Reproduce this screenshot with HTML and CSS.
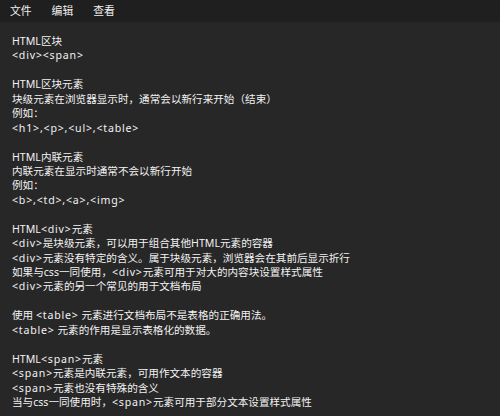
FILE: index.html
```html
<!DOCTYPE html>
<html lang="zh-CN">
<head>
<meta charset="utf-8">
<title>记事本</title>
<link rel="stylesheet" href="styles.css">
</head>
<body>
<div class="window">
  <nav class="menubar">
    <span class="menu-item">文件</span>
    <span class="menu-item">编辑</span>
    <span class="menu-item">查看</span>
  </nav>
  <main class="editor">
    <p class="block">HTML区块
<span class="tag">&lt;div&gt;&lt;span&gt;</span></p>
    <p class="block">HTML区块元素
块级元素在浏览器显示时，通常会以新行来开始（结束）
例如：
<span class="tag">&lt;h1&gt;,&lt;p&gt;,&lt;ul&gt;,&lt;table&gt;</span></p>
    <p class="block">HTML内联元素
内联元素在显示时通常不会以新行开始
例如：
<span class="tag">&lt;b&gt;,&lt;td&gt;,&lt;a&gt;,&lt;img&gt;</span></p>
    <p class="block">HTML<span class="tag">&lt;div&gt;</span>元素
<span class="tag">&lt;div&gt;</span>是块级元素，可以用于组合其他HTML元素的容器
<span class="tag">&lt;div&gt;</span>元素没有特定的含义。属于块级元素，浏览器会在其前后显示折行
如果与css一同使用，<span class="tag">&lt;div&gt;</span>元素可用于对大的内容块设置样式属性
<span class="tag">&lt;div&gt;</span>元素的另一个常见的用于文档布局</p>
    <p class="block">使用 <span class="tag">&lt;table&gt;</span> 元素进行文档布局不是表格的正确用法。
<span class="tag">&lt;table&gt;</span> 元素的作用是显示表格化的数据。</p>
    <p class="block">HTML<span class="tag">&lt;span&gt;</span>元素
<span class="tag">&lt;span&gt;</span>元素是内联元素，可用作文本的容器
<span class="tag">&lt;span&gt;</span>元素也没有特殊的含义
当与css一同使用时，<span class="tag">&lt;span&gt;</span>元素可用于部分文本设置样式属性</p>
  </main>
</div>
</body>
</html>
```
FILE: styles.css
```css
html, body {
  margin: 0;
  padding: 0;
  background: #272727;
}
body {
  font-family: "Noto Sans", "Noto Sans CJK SC", sans-serif;
  color: #f2f2f2;
}
.window {
  width: 500px;
  height: 416px;
  overflow: hidden;
  display: flex;
  flex-direction: column;
}
.menubar {
  height: 22px;
  background: #1f1f1f;
  display: flex;
  align-items: center;
  flex-shrink: 0;
}
.menu-item {
  padding: 0 10px;
  font-size: 10.8px;
  line-height: 22px;
  color: #f0f0f0;
}
.editor {
  padding: 12px 0 0 12px;
  font-size: 10.6px;
  line-height: 14.44px;
}
.block {
  margin: 0 0 14.44px;
  white-space: pre;
}
.tag {
  letter-spacing: 0.8px;
}
```
